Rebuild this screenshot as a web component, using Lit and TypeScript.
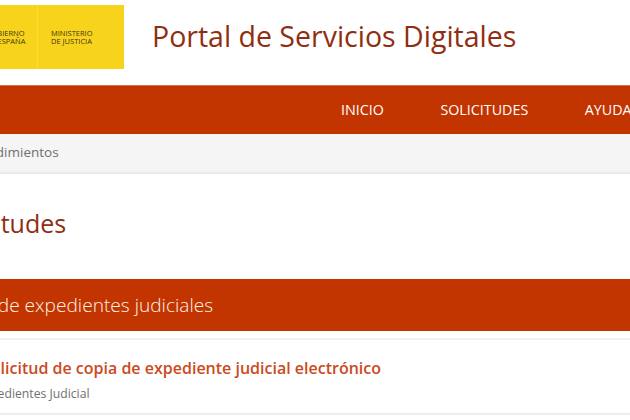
import { LitElement, html, css } from "lit";
import { customElement } from "lit/decorators.js";

@customElement("app-root")
export class AppRoot extends LitElement {
  static styles = css`
    :host {
      display: block;
      width: 630px;
      height: 420px;
      overflow: hidden;
      background: #fff;
      font-family: "Open Sans", sans-serif;
    }
    .page {
      width: 800px;
      margin-left: -60px;
      display: flex;
      flex-direction: column;
    }
    .header {
      height: 85px;
      display: flex;
      align-items: flex-start;
      box-sizing: border-box;
      padding-top: 5px;
    }
    .logo {
      width: 184px;
      height: 64px;
      background: #f8d31c;
      display: flex;
      align-items: center;
      flex: none;
      font-size: 7.5px;
      line-height: 8px;
      color: #3f3512;
      font-weight: 400;
    }
    .logo .gob {
      width: 98px;
      box-sizing: border-box;
      padding-left: 46px;
      border-right: 1px solid #fbdc3c;
      height: 100%;
      display: flex;
      align-items: center;
      white-space: nowrap;
    }
    .logo .min {
      padding-left: 13px;
      white-space: nowrap;
    }
    .title {
      margin: 9px 0 0 28px;
      font-size: 28.5px;
      line-height: 44px;
      font-weight: 400;
      color: #8f2f12;
      white-space: nowrap;
    }
    .nav {
      height: 49px;
      background: #c23400;
      border-top: 1px solid #d9704f;
      box-sizing: border-box;
      display: flex;
      align-items: center;
      padding-left: 401px;
      padding-bottom: 2px;
      gap: 56.5px;
      color: #fff;
      font-size: 14.3px;
      white-space: nowrap;
    }
    .crumb {
      height: 40px;
      background: #f5f5f5;
      box-shadow: inset 0 -3px 3px -2px #ddd;
      display: flex;
      align-items: center;
      padding-left: 20px;
      padding-bottom: 4px;
      box-sizing: border-box;
      font-size: 13.5px;
      color: #707070;
    }
    h1 {
      margin: 0;
      padding: 31px 0 0 1px;
      height: 72px;
      box-sizing: border-box;
      font-size: 25px;
      line-height: 36px;
      font-weight: 400;
      color: #8f2f12;
    }
    .section {
      margin-top: 33px;
      height: 52px;
      background: #c23400;
      color: #fdf3e6;
      display: flex;
      align-items: center;
      padding-left: 4px;
      font-size: 19.1px;
      font-weight: 300;
      white-space: nowrap;
    }
    .row {
      margin-top: 7px;
      border-top: 2px solid #f0f0f0;
      border-bottom: 2px solid #eee;
      height: 77px;
      box-sizing: border-box;
      padding: 17px 0 0 42px;
    }
    .row a {
      display: block;
      font-size: 16px;
      line-height: 22px;
      font-weight: 600;
      color: #cb4a22;
      white-space: nowrap;
    }
    .row span {
      display: block;
      margin: 7px 0 0 -5px;
      font-size: 12.2px;
      line-height: 16px;
      color: #707070;
    }
  `;

  render() {
    return html`
      <div class="page">
        <div class="header">
          <div class="logo">
            <div class="gob"><div>GOBIERNO<br />DE ESPAÑA</div></div>
            <div class="min">MINISTERIO<br />DE JUSTICIA</div>
          </div>
          <div class="title">Portal de Servicios Digitales</div>
        </div>
        <div class="nav"><span>INICIO</span><span>SOLICITUDES</span><span>AYUDA</span></div>
        <div class="crumb">Procedimientos</div>
        <h1>Solicitudes</h1>
        <div class="section">Copia de expedientes judiciales</div>
        <div class="row">
          <a>Solicitud de copia de expediente judicial electrónico</a>
          <span>Expedientes Judicial</span>
        </div>
      </div>
    `;
  }
}
